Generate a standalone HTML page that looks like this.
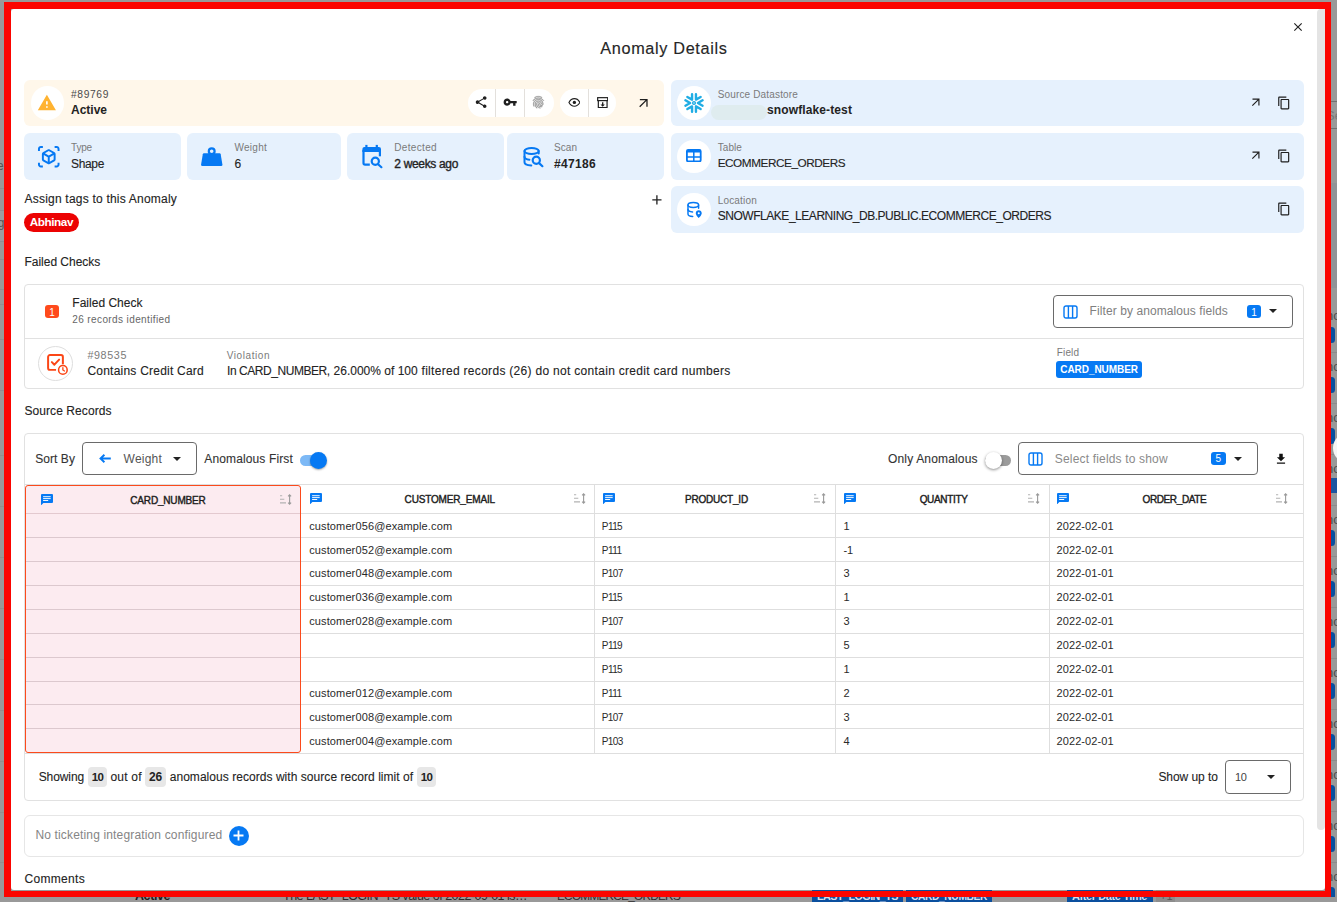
<!DOCTYPE html>
<html lang="en"><head><meta charset="utf-8"><title>Anomaly Details</title>
<style>
*{box-sizing:border-box;margin:0;padding:0}
html,body{width:1337px;height:902px;overflow:hidden;background:#999}
body{position:relative;font-family:"Liberation Sans",sans-serif;color:#232323}
.b{position:absolute;display:block}
.t{position:absolute;white-space:nowrap;line-height:1;display:block}
</style></head>
<body>
<div id="backdrop" aria-hidden="true">
<div class="b" style="left:0px;top:0px;width:1337px;height:902px;background:#999999;"></div>
<div class="b" style="left:1331px;top:183px;width:6px;height:105px;background:#909397;"></div>
<div class="b" style="left:1331px;top:101px;width:6px;height:1px;background:#707070;"></div>
<div class="b" style="left:1331px;top:128px;width:6px;height:1px;background:#707070;"></div>
<span class="t" style="left:1326.00px;top:109px;font-size:13px;color:#777;">Se</span>
<div class="b" style="left:1331px;top:352px;width:6px;height:1px;background:#8b8b8b;"></div>
<span class="t" style="left:1326.00px;top:309px;font-size:13px;color:#4c4c4c;">no</span>
<div class="b" style="left:1328px;top:326.5px;width:6.5px;height:16px;background:#0a4f9e;border-radius:4px;"></div>
<div class="b" style="left:1331px;top:403px;width:6px;height:1px;background:#8b8b8b;"></div>
<span class="t" style="left:1326.00px;top:360px;font-size:13px;color:#4c4c4c;">no</span>
<div class="b" style="left:1328px;top:377.45px;width:6.5px;height:16px;background:#0a4f9e;border-radius:4px;"></div>
<div class="b" style="left:1331px;top:454px;width:6px;height:1px;background:#8b8b8b;"></div>
<span class="t" style="left:1326.00px;top:411px;font-size:13px;color:#4c4c4c;">no</span>
<div class="b" style="left:1328px;top:428.4px;width:6.5px;height:16px;background:#0a4f9e;border-radius:4px;"></div>
<div class="b" style="left:1331px;top:505px;width:6px;height:1px;background:#8b8b8b;"></div>
<span class="t" style="left:1326.00px;top:462px;font-size:13px;color:#4c4c4c;">no</span>
<div class="b" style="left:1329px;top:478.35px;width:9px;height:15px;background:#1d55a0;"></div>
<div class="b" style="left:1331px;top:556px;width:6px;height:1px;background:#8b8b8b;"></div>
<span class="t" style="left:1326.00px;top:513px;font-size:13px;color:#4c4c4c;">no</span>
<div class="b" style="left:1328px;top:530.3px;width:6.5px;height:16px;background:#0a4f9e;border-radius:4px;"></div>
<div class="b" style="left:1331px;top:607px;width:6px;height:1px;background:#8b8b8b;"></div>
<span class="t" style="left:1326.00px;top:564px;font-size:13px;color:#4c4c4c;">no</span>
<div class="b" style="left:1328px;top:581.25px;width:6.5px;height:16px;background:#0a4f9e;border-radius:4px;"></div>
<div class="b" style="left:1331px;top:658px;width:6px;height:1px;background:#8b8b8b;"></div>
<span class="t" style="left:1326.00px;top:615px;font-size:13px;color:#4c4c4c;">no</span>
<div class="b" style="left:1328px;top:632.2px;width:6.5px;height:16px;background:#0a4f9e;border-radius:4px;"></div>
<div class="b" style="left:1331px;top:709px;width:6px;height:1px;background:#8b8b8b;"></div>
<span class="t" style="left:1326.00px;top:666px;font-size:13px;color:#4c4c4c;">no</span>
<div class="b" style="left:1328px;top:683.1500000000001px;width:6.5px;height:16px;background:#0a4f9e;border-radius:4px;"></div>
<div class="b" style="left:1331px;top:760px;width:6px;height:1px;background:#8b8b8b;"></div>
<span class="t" style="left:1326.00px;top:717px;font-size:13px;color:#4c4c4c;">no</span>
<div class="b" style="left:1328px;top:734.1px;width:6.5px;height:16px;background:#0a4f9e;border-radius:4px;"></div>
<div class="b" style="left:1331px;top:811px;width:6px;height:1px;background:#8b8b8b;"></div>
<span class="t" style="left:1326.00px;top:768px;font-size:13px;color:#4c4c4c;">no</span>
<div class="b" style="left:1328px;top:785.05px;width:6.5px;height:16px;background:#0a4f9e;border-radius:4px;"></div>
<div class="b" style="left:1331px;top:862px;width:6px;height:1px;background:#8b8b8b;"></div>
<span class="t" style="left:1326.00px;top:819px;font-size:13px;color:#4c4c4c;">no</span>
<div class="b" style="left:1328px;top:836.0px;width:6.5px;height:16px;background:#0a4f9e;border-radius:4px;"></div>
<div class="b" style="left:1331px;top:912px;width:6px;height:1px;background:#8b8b8b;"></div>
<span class="t" style="left:1326.00px;top:870px;font-size:13px;color:#4c4c4c;">no</span>
<div class="b" style="left:1328px;top:886.95px;width:6.5px;height:16px;background:#0a4f9e;border-radius:4px;"></div>
<div class="b" style="left:1333px;top:433px;width:30px;height:30px;background:#f4f4f4;border-radius:15px;"></div>
<div class="b" style="left:0px;top:455px;width:5px;height:1px;background:#909090;"></div>
<div class="b" style="left:0px;top:506px;width:5px;height:1px;background:#909090;"></div>
<div class="b" style="left:0px;top:557px;width:5px;height:1px;background:#909090;"></div>
<div class="b" style="left:0px;top:608px;width:5px;height:1px;background:#909090;"></div>
<div class="b" style="left:0px;top:659px;width:5px;height:1px;background:#909090;"></div>
<div class="b" style="left:0px;top:710px;width:5px;height:1px;background:#909090;"></div>
<div class="b" style="left:0px;top:761px;width:5px;height:1px;background:#909090;"></div>
<div class="b" style="left:0px;top:812px;width:5px;height:1px;background:#909090;"></div>
<div class="b" style="left:0px;top:862px;width:5px;height:1px;background:#909090;"></div>
<div class="b" style="left:0px;top:913px;width:5px;height:1px;background:#909090;"></div>
<div class="b" style="left:0px;top:188px;width:5px;height:1px;background:#8e8e93;"></div>
<div class="b" style="left:0px;top:210px;width:5px;height:1px;background:#8e8e93;"></div>
<div class="b" style="left:0px;top:241px;width:5px;height:1px;background:#8e8e93;"></div>
<div class="b" style="left:0px;top:259px;width:5px;height:1px;background:#8e8e93;"></div>
<div class="b" style="left:0px;top:289px;width:5px;height:1px;background:#8e8e93;"></div>
<div class="b" style="left:0px;top:304px;width:5px;height:1px;background:#8e8e93;"></div>
<div class="b" style="left:0px;top:339px;width:5px;height:1px;background:#8e8e93;"></div>
<div class="b" style="left:0px;top:390px;width:5px;height:1px;background:#8e8e93;"></div>
<div class="b" style="left:0px;top:211px;width:5px;height:30px;background:#9b9ba0;"></div>
<span class="t" style="left:-3.00px;top:160px;font-size:12px;color:#555;">e</span>
<span class="t" style="left:-9.00px;top:217px;font-size:12px;color:#555;">dg</span>
<div class="b" style="left:0px;top:897px;width:1337px;height:5px;background:#999999;"></div>
<div class="b" style="left:812px;top:886px;width:91px;height:19px;background:#0a4f9e;border-radius:3px;"></div>
<div class="b" style="left:906px;top:886px;width:86px;height:19px;background:#0a4f9e;border-radius:3px;"></div>
<div class="b" style="left:1067px;top:886px;width:85.5px;height:19px;background:#0a4f9e;border-radius:3px;"></div>
<div class="b" style="left:1156px;top:886px;width:19px;height:19px;background:#8c8c8c;border-radius:3px;"></div>
<span class="t" style="left:817.00px;top:891px;font-size:10.75px;font-weight:700;color:#d5dfec;letter-spacing:-0.523px;">LAST_LOGIN_TS</span>
<span class="t" style="left:911.00px;top:892px;font-size:10.25px;font-weight:700;color:#d5dfec;letter-spacing:-0.390px;">CARD_NUMBER</span>
<span class="t" style="left:1072.00px;top:891px;font-size:11px;font-weight:700;color:#d5dfec;letter-spacing:-0.406px;">After Date Time</span>
<span class="t" style="left:1160.00px;top:891px;font-size:11px;color:#555;">+1</span>
<span class="t" style="left:135.00px;top:890px;font-size:12.5px;font-weight:700;color:#1d1d1d;letter-spacing:-0.419px;">Active</span>
<span class="t" style="left:283.00px;top:890px;font-size:12.5px;color:#2a2a2a;letter-spacing:-0.505px;">The LAST_LOGIN_TS value of 2022-09-01 is…</span>
<span class="t" style="left:557.00px;top:890px;font-size:11.75px;color:#2a2a2a;letter-spacing:-0.718px;">ECOMMERCE_ORDERS</span>
</div>
<main id="anomaly-modal" role="dialog" aria-label="Anomaly Details">
<div class="b" style="left:11px;top:9px;width:1314px;height:881px;background:#ffffff;border-radius:3px;"></div>
<div class="b" style="left:1317px;top:9px;width:8px;height:821px;background:#e4e4e4;border-radius:4px 0 4px 4px;"></div>
<header>
<span class="t" style="left:600.30px;top:40px;font-size:16.25px;color:#262626;letter-spacing:0.653px;-webkit-text-stroke:0.15px #262626;">Anomaly Details</span>
<svg class="b" style="left:1291.0px;top:20.0px;" width="14" height="14" viewBox="0 0 24 24"><path d="M19 6.41L17.59 5 12 10.59 6.41 5 5 6.41 10.59 12 5 17.59 6.41 19 12 13.41 17.59 19 19 17.59 13.41 12z" fill="#222"/></svg>
</header>
<section id="summary">
<div class="b" style="left:24px;top:80px;width:640px;height:46px;background:#fff7ea;border-radius:6px;"></div>
<div class="b" style="left:31px;top:86px;width:33px;height:34px;background:#fff;border-radius:17px;"></div>
<svg class="b" style="left:37.225px;top:92.625px;" width="19.75" height="19.75" viewBox="0 0 24 24"><path d="M1 21h22L12 2 1 21zm12-3h-2v-2h2v2zm0-4h-2v-4h2v4z" fill="#ffb331"/></svg>
<span class="t" style="left:71.00px;top:90px;font-size:10.25px;color:#4a4a4a;letter-spacing:0.633px;">#89769</span>
<span class="t" style="left:71.00px;top:104px;font-size:12px;font-weight:700;">Active</span>
<div class="b" style="left:468px;top:89px;width:86px;height:28px;background:#fff;border-radius:14px;"></div>
<div class="b" style="left:495px;top:89px;width:1px;height:28px;background:#e3e0dc;"></div>
<div class="b" style="left:524px;top:89px;width:1px;height:28px;background:#e3e0dc;"></div>
<div class="b" style="left:560px;top:89px;width:56px;height:28px;background:#fff;border-radius:14px;"></div>
<div class="b" style="left:588px;top:89px;width:1px;height:28px;background:#e3e0dc;"></div>
<svg class="b" style="left:474.15000000000003px;top:95.44999999999999px;" width="14.3" height="14.3" viewBox="0 0 24 24"><path d="M18 16.08c-.76 0-1.44.3-1.96.77L8.91 12.7c.05-.23.09-.46.09-.7s-.04-.47-.09-.7l7.05-4.11c.54.5 1.25.81 2.04.81 1.66 0 3-1.34 3-3s-1.34-3-3-3-3 1.34-3 3c0 .24.04.47.09.7L8.04 9.81C7.5 9.31 6.79 9 6 9c-1.66 0-3 1.34-3 3s1.34 3 3 3c.79 0 1.5-.31 2.04-.81l7.12 4.16c-.05.21-.08.43-.08.65 0 1.61 1.31 2.92 2.92 2.92 1.61 0 2.92-1.31 2.92-2.92s-1.31-2.92-2.92-2.92z" fill="#1f1f1f"/></svg>
<svg class="b" style="left:502.65000000000003px;top:95.44999999999999px;" width="14.3" height="14.3" viewBox="0 0 24 24"><path d="M12.65 10C11.83 7.67 9.61 6 7 6c-3.31 0-6 2.69-6 6s2.69 6 6 6c2.61 0 4.83-1.67 5.65-4H17v4h4v-4h2v-4H12.65zM7 14c-1.1 0-2-.9-2-2s.9-2 2-2 2 .9 2 2-.9 2-2 2z" fill="#1f1f1f"/></svg>
<svg class="b" style="left:531.1px;top:95.4px;" width="14.6" height="14.6" viewBox="0 0 24 24"><path d="M17.81 4.47c-.08 0-.16-.02-.23-.06C15.66 3.42 14 3 12.01 3c-1.98 0-3.86.47-5.57 1.41-.24.13-.54.04-.68-.2-.13-.24-.04-.55.2-.68C7.82 2.52 9.86 2 12.01 2c2.13 0 3.99.47 6.03 1.52.25.13.34.43.21.67-.09.18-.26.28-.44.28zM3.500 9.720c-.1 0-.2-.03-.29-.09-.23-.16-.28-.47-.12-.7.99-1.400 2.250-2.500 3.750-3.270C9.980 4.040 14 4.030 17.150 5.650c1.500.770 2.760 1.860 3.750 3.250.16.220.11.540-.12.700-.23.160-.54.110-.7-.120-.9-1.260-2.040-2.250-3.390-2.940-2.870-1.470-6.540-1.470-9.400.010-1.360.700-2.500 1.700-3.400 2.960-.08.140-.23.210-.39.210zm6.250 12.070c-.13 0-.26-.05-.35-.15-.87-.87-1.340-1.430-2.010-2.640-.69-1.230-1.050-2.730-1.050-4.340 0-2.970 2.540-5.390 5.660-5.390s5.660 2.420 5.660 5.390c0 .28-.22.5-.5.5s-.5-.22-.5-.5c0-2.420-2.090-4.390-4.660-4.390-2.570 0-4.660 1.970-4.660 4.390 0 1.440.32 2.770.93 3.850.64 1.150 1.080 1.640 1.850 2.420.19.200.19.510 0 .710-.11.100-.24.150-.37.150zm7.170-1.850c-1.190 0-2.240-.3-3.100-.89-1.490-1.010-2.380-2.650-2.380-4.390 0-.28.220-.5.5-.5s.5.220.5.500c0 1.410.720 2.740 1.940 3.560.71.480 1.540.710 2.540.710.240 0 .640-.030 1.040-.100.270-.050.530.130.580.410.050.270-.130.530-.410.580-.570.110-1.070.120-1.210.120zM14.910 22c-.04 0-.09-.01-.13-.02-1.590-.44-2.630-1.030-3.720-2.100-1.400-1.390-2.170-3.240-2.170-5.220 0-1.620 1.380-2.940 3.080-2.940 1.700 0 3.080 1.320 3.080 2.940 0 1.070.93 1.940 2.080 1.940s2.080-.87 2.080-1.940c0-3.770-3.250-6.830-7.250-6.830-2.840 0-5.440 1.580-6.610 4.030-.39.810-.59 1.760-.59 2.800 0 .780.070 2.010.670 3.610.1.260-.03.550-.29.640-.26.100-.55-.04-.64-.29-.49-1.310-.73-2.610-.73-3.960 0-1.200.230-2.290.680-3.240 1.330-2.790 4.280-4.600 7.510-4.600 4.550 0 8.250 3.510 8.250 7.830 0 1.620-1.380 2.940-3.080 2.940s-3.080-1.320-3.080-2.940c0-1.070-.93-1.940-2.080-1.940s-2.080.87-2.080 1.940c0 1.710.660 3.310 1.870 4.510.95.940 1.860 1.460 3.270 1.850.27.070.42.350.35.610-.05.230-.26.380-.47.380z" fill="#8a8a8a" stroke="#9c9c9c" stroke-width="0.700"/></svg>
<svg class="b" style="left:567.7px;top:98.19999999999999px;" width="12.8" height="8.8" viewBox="0 0 14 10"><path d="M0.800 5C2.400 2 4.600 0.700 7 0.700S11.600 2 13.200 5C11.600 8 9.400 9.300 7 9.300S2.400 8 0.800 5z" fill="none" stroke="#1f1f1f" stroke-width="1.250"/><circle cx="7" cy="5" r="1.900" fill="#1f1f1f"/></svg>
<svg class="b" style="left:596.8px;top:96.7px;" width="11.4" height="11.4" viewBox="0 0 12 12"><g fill="none" stroke="#1f1f1f" stroke-width="1.250"><rect x="0.700" y="0.700" width="10.600" height="3.100"/><path d="M1.400 4.200v6.900h9.200V4.200"/></g><path d="M5.300 5.600h1.400v2.300h1.600L6 10.200 3.700 7.900h1.600z" fill="#1f1f1f"/></svg>
<svg class="b" style="left:635.95px;top:94.85px;" width="15.5" height="15.5" viewBox="0 0 24 24"><path d="M6 6v2h8.590L5 17.590 6.410 19 16 9.410V18h2V6z" fill="#1f1f1f"/></svg>
<div class="b" style="left:671px;top:80px;width:633px;height:46px;background:#e6f1fd;border-radius:6px;"></div>
<div class="b" style="left:677px;top:86px;width:34px;height:34px;background:#fff;border-radius:17px;"></div>
<svg class="b" style="left:682px;top:91px;" width="24" height="24" viewBox="-12 -12 24 24"><path d="M8.58 -2.70L3.90 -0.00L8.58 2.70M1.95 -8.78L1.95 -3.38L6.63 -6.08M-6.63 -6.08L-1.95 -3.38L-1.95 -8.78M-8.58 2.70L-3.90 -0.00L-8.58 -2.70M-1.95 8.78L-1.95 3.38L-6.63 6.08M6.63 6.08L1.95 3.38L1.95 8.78" fill="none" stroke="#20ade4" stroke-width="2.400" stroke-linecap="round" stroke-linejoin="round"/><circle cx="0" cy="0" r="1.500" fill="#7fd0f0" stroke="#20ade4" stroke-width="1.100"/></svg>
<span class="t" style="left:717.70px;top:90px;font-size:10px;color:#7a7a7a;letter-spacing:0.155px;">Source Datastore</span>
<div class="b" style="left:711px;top:105px;width:56px;height:15px;background:#dfecef;border-radius:7.5px;"></div>
<span class="t" style="left:767.00px;top:104px;font-size:12px;font-weight:700;letter-spacing:0.118px;">snowflake-test</span>
<svg class="b" style="left:1248.6px;top:95.0px;" width="14" height="14" viewBox="0 0 24 24"><path d="M6 6v2h8.590L5 17.590 6.410 19 16 9.410V18h2V6z" fill="#1f1f1f"/></svg>
<svg class="b" style="left:1276.5px;top:95.6px;" width="14" height="14" viewBox="0 0 24 24"><path d="M16 1H4c-1.100 0-2 .900-2 2v14h2V3h12V1zm3 4H8c-1.100 0-2 .900-2 2v14c0 1.100.900 2 2 2h11c1.100 0 2-.900 2-2V7c0-1.100-.900-2-2-2zm0 16H8V7h11v14z" fill="#1f1f1f"/></svg>
<div class="b" style="left:24px;top:133px;width:157px;height:47px;background:#e6f1fd;border-radius:6px;"></div>
<div class="b" style="left:187px;top:133px;width:154px;height:47px;background:#e6f1fd;border-radius:6px;"></div>
<div class="b" style="left:347px;top:133px;width:157px;height:47px;background:#e6f1fd;border-radius:6px;"></div>
<div class="b" style="left:507px;top:133px;width:157px;height:47px;background:#e6f1fd;border-radius:6px;"></div>
<svg class="b" style="left:36.75px;top:144.75px;" width="23.5" height="23.5" viewBox="0 0 24 24"><path d="M3 4c0-.55.45-1 1-1h2V1H4C2.340 1 1 2.340 1 4v2h2V4zM3 20v-2H1v2c0 1.660 1.340 3 3 3h2v-2H4c-.550 0-1-.450-1-1zM20 1h-2v2h2c.550 0 1 .450 1 1v2h2V4c0-1.660-1.340-3-3-3zM21 20c0 .550-.450 1-1 1h-2v2h2c1.660 0 3-1.340 3-3v-2h-2v2zM19 14.870V9.130c0-.720-.380-1.380-1-1.730l-5-2.880c-.310-.180-.650-.270-1-.270s-.690.090-1 .270l-5 2.870c-.620.350-1 1.010-1 1.730v5.740c0 .720.380 1.380 1 1.730l5 2.880c.310.180.650.270 1 .270s.690-.090 1-.270l5-2.880c.620-.340 1-1 1-1.720zm-8 2.300l-4-2.300v-4.630l4 2.330v4.600zm1-6.330L8.040 8.530 12 6.250l3.960 2.280L12 10.840zm5 4.030l-4 2.300v-4.600l4-2.330v4.630z" fill="#0679f3"/></svg>
<span class="t" style="left:71.00px;top:143px;font-size:10px;color:#7a7a7a;letter-spacing:-0.170px;">Type</span>
<span class="t" style="left:71.00px;top:158px;font-size:12px;letter-spacing:-0.339px;-webkit-text-stroke:0.12px #232323;">Shape</span>
<svg class="b" style="left:192px;top:136px;" width="40" height="40" viewBox="0 0 40 40"><path d="M11.900 17.200H27.600Q28.500 17.200 28.700 18.200L30.400 28.500Q30.600 30 29.200 30H10.300Q8.900 30 9.100 28.500L10.800 18.200Q11 17.200 11.900 17.200Z" fill="#0679f3"/><circle cx="19.700" cy="15.300" r="2.900" fill="none" stroke="#0679f3" stroke-width="2.200"/></svg>
<span class="t" style="left:234.50px;top:143px;font-size:10px;color:#7a7a7a;letter-spacing:0.260px;">Weight</span>
<span class="t" style="left:234.50px;top:158px;font-size:12px;-webkit-text-stroke:0.12px #232323;">6</span>
<svg class="b" style="left:352px;top:136px;" width="40" height="40" viewBox="0 0 40 40"><g fill="none" stroke="#0679f3" stroke-width="2.200"><path d="M17.800 28.600H13.100a1.600 1.600 0 0 1-1.600-1.600V14"/><path d="M27.900 15v5.300"/><circle cx="23.300" cy="25.300" r="3.600"/><path d="M26.100 28.200l3.300 3" stroke-linecap="round"/></g><path d="M10.400 16.100V13a2.100 2.100 0 0 1 2.100-2.100h14.400a2.100 2.100 0 0 1 2.100 2.100v3.100z" fill="#0679f3"/><rect x="13.300" y="8.900" width="2.200" height="3" fill="#0679f3"/><rect x="23.700" y="8.900" width="2.200" height="3" fill="#0679f3"/></svg>
<span class="t" style="left:394.30px;top:143px;font-size:10px;color:#7a7a7a;letter-spacing:0.335px;">Detected</span>
<span class="t" style="left:394.30px;top:158px;font-size:12px;letter-spacing:-0.334px;-webkit-text-stroke:0.35px #232323;">2 weeks ago</span>
<svg class="b" style="left:513px;top:136px;" width="40" height="40" viewBox="0 0 40 40"><g fill="none" stroke="#0679f3" stroke-width="2" stroke-linecap="round"><ellipse cx="18.600" cy="15" rx="7.100" ry="3.100"/><path d="M11.500 15v11.200c0 1.700 2.900 3 6.800 3.200"/><path d="M25.700 15v2.600"/><path d="M11.500 20.700c0 1.400 2.100 2.600 4.900 3"/><circle cx="23.300" cy="24.300" r="3.600" stroke-width="2.200"/><path d="M26.100 27.100l3.300 3.100" stroke-width="2.200"/></g></svg>
<span class="t" style="left:554.00px;top:143px;font-size:10px;color:#7a7a7a;letter-spacing:0.052px;">Scan</span>
<span class="t" style="left:554.00px;top:158px;font-size:12px;font-weight:700;letter-spacing:0.327px;">#47186</span>
<div class="b" style="left:671px;top:133px;width:633px;height:47px;background:#e6f1fd;border-radius:6px;"></div>
<div class="b" style="left:677px;top:140px;width:34px;height:33px;background:#fff;border-radius:17px;"></div>
<svg class="b" style="left:686.4px;top:148.6px;" width="15.6" height="13.3" viewBox="0 0 15.600 13.300"><rect x="0.900" y="0.900" width="13.800" height="11.500" rx="1.300" fill="none" stroke="#0679f3" stroke-width="1.800"/><rect x="0.900" y="0.900" width="13.800" height="2.600" fill="#0679f3"/><path d="M7.800 2v11M0.500 7.900h14.600" stroke="#0679f3" stroke-width="1.500"/></svg>
<span class="t" style="left:717.70px;top:143px;font-size:10px;color:#7a7a7a;letter-spacing:0.079px;">Table</span>
<span class="t" style="left:717.70px;top:157px;font-size:11.75px;letter-spacing:-0.443px;-webkit-text-stroke:0.12px #232323;">ECOMMERCE_ORDERS</span>
<svg class="b" style="left:1248.6px;top:148.0px;" width="14" height="14" viewBox="0 0 24 24"><path d="M6 6v2h8.590L5 17.590 6.410 19 16 9.410V18h2V6z" fill="#1f1f1f"/></svg>
<svg class="b" style="left:1276.5px;top:148.6px;" width="14" height="14" viewBox="0 0 24 24"><path d="M16 1H4c-1.100 0-2 .900-2 2v14h2V3h12V1zm3 4H8c-1.100 0-2 .900-2 2v14c0 1.100.900 2 2 2h11c1.100 0 2-.900 2-2V7c0-1.100-.900-2-2-2zm0 16H8V7h11v14z" fill="#1f1f1f"/></svg>
<span class="t" style="left:24.50px;top:193px;font-size:12px;letter-spacing:0.213px;-webkit-text-stroke:0.12px #232323;">Assign tags to this Anomaly</span>
<svg class="b" style="left:648.6px;top:191.6px;" width="15.8" height="15.8" viewBox="0 0 24 24"><path d="M19 13h-6v6h-2v-6H5v-2h6V5h2v6h6v2z" fill="#222"/></svg>
<div class="b" style="left:24px;top:213px;width:55px;height:19px;background:#ec0303;border-radius:9.5px;"></div>
<span class="t" style="left:29.70px;top:216px;font-size:11.75px;font-weight:700;color:#ffffff;letter-spacing:-0.435px;">Abhinav</span>
<div class="b" style="left:671px;top:186px;width:633px;height:47px;background:#e6f1fd;border-radius:6px;"></div>
<div class="b" style="left:677px;top:193px;width:34px;height:33px;background:#fff;border-radius:17px;"></div>
<svg class="b" style="left:686px;top:201px;" width="17.5" height="18.2" viewBox="0 0 24 25"><g fill="none" stroke="#0679f3" stroke-width="2" stroke-linecap="round"><ellipse cx="10" cy="5.500" rx="7.300" ry="3.300"/><path d="M2.700 5.500v12.500c0 1.800 2.800 3.200 6.500 3.400"/><path d="M17.300 5.500v4.500"/><path d="M2.700 11.800c0 1.700 2.700 3 6.300 3.300"/></g><path d="M17.500 12.800c-2.300 0-4.100 1.800-4.100 4 0 2.800 4.100 6.600 4.100 6.600s4.100-3.800 4.100-6.600c0-2.200-1.800-4-4.100-4zm0 5.400a1.400 1.400 0 1 1 0-2.800 1.400 1.400 0 0 1 0 2.800z" fill="#0679f3"/></svg>
<span class="t" style="left:717.70px;top:196px;font-size:10px;color:#7a7a7a;letter-spacing:0.187px;">Location</span>
<span class="t" style="left:717.70px;top:210px;font-size:12px;letter-spacing:-0.462px;-webkit-text-stroke:0.12px #232323;">SNOWFLAKE_LEARNING_DB.PUBLIC.ECOMMERCE_ORDERS</span>
<svg class="b" style="left:1276.5px;top:201.6px;" width="14" height="14" viewBox="0 0 24 24"><path d="M16 1H4c-1.100 0-2 .900-2 2v14h2V3h12V1zm3 4H8c-1.100 0-2 .900-2 2v14c0 1.100.900 2 2 2h11c1.100 0 2-.900 2-2V7c0-1.100-.900-2-2-2zm0 16H8V7h11v14z" fill="#1f1f1f"/></svg>
</section>
<section id="failed-checks">
<span class="t" style="left:24.50px;top:256px;font-size:12px;letter-spacing:-0.025px;-webkit-text-stroke:0.12px #232323;">Failed Checks</span>
<div class="b" style="left:24px;top:284px;width:1280px;height:105px;background:#fff;border-radius:4px;border:1px solid #e1e1e1;"></div>
<div class="b" style="left:25px;top:338px;width:1278px;height:1px;background:#e1e1e1;"></div>
<div class="b" style="left:45px;top:305px;width:14px;height:13px;background:#ff4a1c;border-radius:3px;"></div>
<span class="t" style="left:49.30px;top:308px;font-size:10px;color:#fff;">1</span>
<span class="t" style="left:72.30px;top:297px;font-size:12px;letter-spacing:0.014px;-webkit-text-stroke:0.12px #232323;">Failed Check</span>
<span class="t" style="left:72.30px;top:315px;font-size:10px;color:#666;letter-spacing:0.388px;">26 records identified</span>
<div class="b" style="left:1053px;top:295px;width:240px;height:33px;background:#fff;border-radius:4px;border:1px solid #6a6a6a;"></div>
<svg class="b" style="left:1063px;top:304.5px;" width="15" height="14" viewBox="0 0 15 14"><rect x="1" y="1" width="13" height="12" rx="2" fill="none" stroke="#0679f3" stroke-width="1.400"/><path d="M5.400 1v12M9.600 1v12" stroke="#0679f3" stroke-width="1.400"/></svg>
<span class="t" style="left:1089.60px;top:305px;font-size:12px;color:#808080;letter-spacing:0.086px;">Filter by anomalous fields</span>
<div class="b" style="left:1247px;top:305px;width:14px;height:13px;background:#0679f3;border-radius:3px;"></div>
<span class="t" style="left:1251.30px;top:308px;font-size:10px;color:#fff;">1</span>
<svg class="b" style="left:1268.5px;top:308.5px;" width="8" height="4" viewBox="0 0 8 4"><path d="M0 0h8L4 4z" fill="#222"/></svg>
<div class="b" style="left:38px;top:346px;width:35px;height:35px;background:#fff;border-radius:17.5px;border:1px solid #dedede;"></div>
<svg class="b" style="left:47px;top:354.2px;" width="21.5" height="21.5" viewBox="1.8 1.8 19.5 19.5"><g fill="none" stroke="#fb4616" stroke-width="1.800" stroke-linejoin="round"><path d="M16.200 11V4.500a1.700 1.700 0 0 0-1.700-1.700h-10A1.700 1.700 0 0 0 2.800 4.500v10a1.700 1.700 0 0 0 1.700 1.700H10"/><path d="M6.200 9.200l2.300 2.300 4.300-4.600" stroke-linecap="round"/><circle cx="16.200" cy="16.200" r="3.900" fill="#fff" stroke-width="1.400"/><path d="M16.200 14.100V16.300l1.500 .9" stroke-width="1.200" stroke-linecap="round"/></g></svg>
<span class="t" style="left:87.40px;top:350px;font-size:10.75px;color:#7a7a7a;letter-spacing:0.622px;">#98535</span>
<span class="t" style="left:87.40px;top:365px;font-size:12px;letter-spacing:0.228px;-webkit-text-stroke:0.12px #232323;">Contains Credit Card</span>
<span class="t" style="left:226.80px;top:351px;font-size:10px;color:#7a7a7a;letter-spacing:0.558px;">Violation</span>
<span class="t" style="left:227.00px;top:365px;font-size:12px;letter-spacing:-0.444px;-webkit-text-stroke:0.10px #232323;">In CARD_NUMBER, </span>
<span class="t" style="left:333.60px;top:365px;font-size:12px;-webkit-text-stroke:0.10px #232323;">26.000% of 100 </span>
<span class="t" style="left:421.50px;top:365px;font-size:12px;letter-spacing:0.301px;-webkit-text-stroke:0.10px #232323;">filtered records (26) do not contain credit card numbers</span>
<span class="t" style="left:1056.80px;top:348px;font-size:10px;color:#7a7a7a;letter-spacing:0.145px;">Field</span>
<div class="b" style="left:1056px;top:361px;width:86px;height:17px;background:#0679f3;border-radius:3px;"></div>
<span class="t" style="left:1060.30px;top:365px;font-size:10px;font-weight:700;color:#fff;letter-spacing:-0.058px;">CARD_NUMBER</span>
</section>
<section id="source-records">
<span class="t" style="left:24.50px;top:405px;font-size:12px;letter-spacing:0.069px;-webkit-text-stroke:0.12px #232323;">Source Records</span>
<div class="b" style="left:24px;top:433px;width:1280px;height:368px;background:#fff;border-radius:4px;border:1px solid #e1e1e1;"></div>
<span class="t" style="left:35.20px;top:453px;font-size:12px;color:#333;letter-spacing:0.065px;-webkit-text-stroke:0.10px #333;">Sort By</span>
<div class="b" style="left:82px;top:442px;width:115px;height:33px;background:#fff;border-radius:4px;border:1px solid #6a6a6a;"></div>
<svg class="b" style="left:99px;top:453.3px;" width="12.5" height="11" viewBox="0 0 12.500 11"><path d="M11.800 5.500H1.800M5.400 1.700L1.500 5.500 5.400 9.300" fill="none" stroke="#0679f3" stroke-width="1.900"/></svg>
<span class="t" style="left:123.60px;top:453px;font-size:12px;color:#555;letter-spacing:0.212px;">Weight</span>
<svg class="b" style="left:173px;top:457px;" width="8" height="4" viewBox="0 0 8 4"><path d="M0 0h8L4 4z" fill="#222"/></svg>
<span class="t" style="left:204.30px;top:453px;font-size:12px;color:#333;letter-spacing:0.127px;-webkit-text-stroke:0.10px #333;">Anomalous First</span>
<div class="b" style="left:300px;top:455px;width:26px;height:11px;background:#7db9f6;border-radius:5.5px;"></div>
<div class="b" style="left:310px;top:452px;width:17px;height:17px;background:#0679f3;border-radius:8.5px;box-shadow:0 1px 2px rgba(0,0,0,.35);"></div>
<span class="t" style="left:888.00px;top:453px;font-size:12px;color:#333;letter-spacing:0.166px;-webkit-text-stroke:0.10px #333;">Only Anomalous</span>
<div class="b" style="left:985px;top:455px;width:26px;height:11px;background:#9b9b9b;border-radius:5.5px;"></div>
<div class="b" style="left:985px;top:452px;width:17px;height:17px;background:#fff;border-radius:8.5px;box-shadow:0 1px 3px rgba(0,0,0,.45);"></div>
<div class="b" style="left:1018px;top:442px;width:240px;height:33px;background:#fff;border-radius:4px;border:1px solid #6a6a6a;"></div>
<svg class="b" style="left:1028px;top:452.3px;" width="15" height="14" viewBox="0 0 15 14"><rect x="1" y="1" width="13" height="12" rx="2" fill="none" stroke="#0679f3" stroke-width="1.400"/><path d="M5.400 1v12M9.600 1v12" stroke="#0679f3" stroke-width="1.400"/></svg>
<span class="t" style="left:1054.80px;top:453px;font-size:12px;color:#8a8a8a;letter-spacing:0.172px;">Select fields to show</span>
<div class="b" style="left:1211px;top:452px;width:15px;height:13px;background:#0679f3;border-radius:3px;"></div>
<span class="t" style="left:1215.60px;top:454px;font-size:10px;color:#fff;">5</span>
<svg class="b" style="left:1233.7px;top:456.5px;" width="8" height="4" viewBox="0 0 8 4"><path d="M0 0h8L4 4z" fill="#222"/></svg>
<svg class="b" style="left:1273.5px;top:451.6px;" width="14" height="14" viewBox="0 0 24 24"><path d="M19 9h-4V3H9v6H5l7 7 7-7zM5 18v2h14v-2H5z" fill="#111"/></svg>
<div class="b" style="left:25px;top:484px;width:1278px;height:1px;background:#dedede;"></div>
<div class="b" style="left:25px;top:513px;width:1278px;height:1px;background:#dedede;"></div>
<div class="b" style="left:25px;top:537px;width:1278px;height:1px;background:#dedede;"></div>
<div class="b" style="left:25px;top:561px;width:1278px;height:1px;background:#dedede;"></div>
<div class="b" style="left:25px;top:585px;width:1278px;height:1px;background:#dedede;"></div>
<div class="b" style="left:25px;top:609px;width:1278px;height:1px;background:#dedede;"></div>
<div class="b" style="left:25px;top:633px;width:1278px;height:1px;background:#dedede;"></div>
<div class="b" style="left:25px;top:657px;width:1278px;height:1px;background:#dedede;"></div>
<div class="b" style="left:25px;top:681px;width:1278px;height:1px;background:#dedede;"></div>
<div class="b" style="left:25px;top:704px;width:1278px;height:1px;background:#dedede;"></div>
<div class="b" style="left:25px;top:728px;width:1278px;height:1px;background:#dedede;"></div>
<div class="b" style="left:25px;top:753px;width:1278px;height:1px;background:#dedede;"></div>
<div class="b" style="left:594px;top:485px;width:1px;height:268px;background:#dedede;"></div>
<div class="b" style="left:835px;top:485px;width:1px;height:268px;background:#dedede;"></div>
<div class="b" style="left:1049px;top:485px;width:1px;height:268px;background:#dedede;"></div>
<div class="b" style="left:25px;top:485px;width:276px;height:268px;background:#fcebf0;border-radius:3px;border:1px solid #fb4a1c;"></div>
<div class="b" style="left:26px;top:513px;width:274px;height:1px;background:#e3c9cf;"></div>
<div class="b" style="left:26px;top:537px;width:274px;height:1px;background:#dcc8ce;"></div>
<div class="b" style="left:26px;top:561px;width:274px;height:1px;background:#dcc8ce;"></div>
<div class="b" style="left:26px;top:585px;width:274px;height:1px;background:#dcc8ce;"></div>
<div class="b" style="left:26px;top:609px;width:274px;height:1px;background:#dcc8ce;"></div>
<div class="b" style="left:26px;top:633px;width:274px;height:1px;background:#dcc8ce;"></div>
<div class="b" style="left:26px;top:657px;width:274px;height:1px;background:#dcc8ce;"></div>
<div class="b" style="left:26px;top:681px;width:274px;height:1px;background:#dcc8ce;"></div>
<div class="b" style="left:26px;top:704px;width:274px;height:1px;background:#dcc8ce;"></div>
<div class="b" style="left:26px;top:728px;width:274px;height:1px;background:#dcc8ce;"></div>
<svg class="b" style="left:40.9px;top:493.7px;" width="12" height="11.5" viewBox="0 0 12 11.500"><path d="M1 0h10a1 1 0 0 1 1 1v7a1 1 0 0 1-1 1H2.400L0 11.400V1a1 1 0 0 1 1-1z" fill="#0679f3"/><path d="M2.100 2.700h7.600M2.100 4.600h7.600M2.100 6.500h5.100" stroke="#fff" stroke-width="0.950" fill="none"/></svg>
<svg class="b" style="left:280.2px;top:494.2px;" width="12.5" height="11" viewBox="0 0 12.500 11"><g fill="none" stroke-width="1.100"><path d="M0 1.700h2.200M0 5.300h4.300M0 8.900h6" stroke="#b2b2b2"/><path d="M9.600 0.800v9.400M8.100 2.300l1.500-1.500 1.500 1.500M8.100 8.700l1.500 1.500 1.500-1.500" stroke="#9a9a9a"/></g></svg>
<span class="t" style="left:130.30px;top:496px;font-size:10px;color:#1c1c1c;letter-spacing:-0.176px;-webkit-text-stroke:0.40px #1c1c1c;">CARD_NUMBER</span>
<svg class="b" style="left:310px;top:492.59999999999997px;" width="12" height="11.5" viewBox="0 0 12 11.500"><path d="M1 0h10a1 1 0 0 1 1 1v7a1 1 0 0 1-1 1H2.400L0 11.400V1a1 1 0 0 1 1-1z" fill="#0679f3"/><path d="M2.100 2.700h7.600M2.100 4.600h7.600M2.100 6.500h5.100" stroke="#fff" stroke-width="0.950" fill="none"/></svg>
<svg class="b" style="left:573.5px;top:493.09999999999997px;" width="12.5" height="11" viewBox="0 0 12.500 11"><g fill="none" stroke-width="1.100"><path d="M0 1.700h2.200M0 5.300h4.300M0 8.900h6" stroke="#b2b2b2"/><path d="M9.600 0.800v9.400M8.100 2.300l1.500-1.500 1.500 1.500M8.100 8.700l1.500 1.500 1.500-1.500" stroke="#9a9a9a"/></g></svg>
<span class="t" style="left:404.60px;top:495px;font-size:10px;color:#1c1c1c;letter-spacing:-0.165px;-webkit-text-stroke:0.40px #1c1c1c;">CUSTOMER_EMAIL</span>
<svg class="b" style="left:602.9px;top:492.59999999999997px;" width="12" height="11.5" viewBox="0 0 12 11.500"><path d="M1 0h10a1 1 0 0 1 1 1v7a1 1 0 0 1-1 1H2.400L0 11.400V1a1 1 0 0 1 1-1z" fill="#0679f3"/><path d="M2.100 2.700h7.600M2.100 4.600h7.600M2.100 6.500h5.100" stroke="#fff" stroke-width="0.950" fill="none"/></svg>
<svg class="b" style="left:814.3px;top:493.09999999999997px;" width="12.5" height="11" viewBox="0 0 12.500 11"><g fill="none" stroke-width="1.100"><path d="M0 1.700h2.200M0 5.300h4.300M0 8.900h6" stroke="#b2b2b2"/><path d="M9.600 0.800v9.400M8.100 2.300l1.500-1.500 1.500 1.500M8.100 8.700l1.500 1.500 1.500-1.500" stroke="#9a9a9a"/></g></svg>
<span class="t" style="left:685.00px;top:495px;font-size:10px;color:#1c1c1c;letter-spacing:-0.210px;-webkit-text-stroke:0.40px #1c1c1c;">PRODUCT_ID</span>
<svg class="b" style="left:844.2px;top:492.59999999999997px;" width="12" height="11.5" viewBox="0 0 12 11.500"><path d="M1 0h10a1 1 0 0 1 1 1v7a1 1 0 0 1-1 1H2.400L0 11.400V1a1 1 0 0 1 1-1z" fill="#0679f3"/><path d="M2.100 2.700h7.600M2.100 4.600h7.600M2.100 6.500h5.100" stroke="#fff" stroke-width="0.950" fill="none"/></svg>
<svg class="b" style="left:1028.3px;top:493.09999999999997px;" width="12.5" height="11" viewBox="0 0 12.500 11"><g fill="none" stroke-width="1.100"><path d="M0 1.700h2.200M0 5.300h4.300M0 8.900h6" stroke="#b2b2b2"/><path d="M9.600 0.800v9.400M8.100 2.300l1.500-1.500 1.500 1.500M8.100 8.700l1.500 1.500 1.500-1.500" stroke="#9a9a9a"/></g></svg>
<span class="t" style="left:919.70px;top:495px;font-size:10px;color:#1c1c1c;letter-spacing:-0.345px;-webkit-text-stroke:0.40px #1c1c1c;">QUANTITY</span>
<svg class="b" style="left:1057.3px;top:492.59999999999997px;" width="12" height="11.5" viewBox="0 0 12 11.500"><path d="M1 0h10a1 1 0 0 1 1 1v7a1 1 0 0 1-1 1H2.400L0 11.400V1a1 1 0 0 1 1-1z" fill="#0679f3"/><path d="M2.100 2.700h7.600M2.100 4.600h7.600M2.100 6.500h5.100" stroke="#fff" stroke-width="0.950" fill="none"/></svg>
<svg class="b" style="left:1276.2px;top:493.09999999999997px;" width="12.5" height="11" viewBox="0 0 12.500 11"><g fill="none" stroke-width="1.100"><path d="M0 1.700h2.200M0 5.300h4.300M0 8.900h6" stroke="#b2b2b2"/><path d="M9.600 0.800v9.400M8.100 2.300l1.500-1.500 1.500 1.500M8.100 8.700l1.500 1.500 1.500-1.500" stroke="#9a9a9a"/></g></svg>
<span class="t" style="left:1142.50px;top:495px;font-size:10px;color:#1c1c1c;letter-spacing:-0.380px;-webkit-text-stroke:0.40px #1c1c1c;">ORDER_DATE</span>
<span class="t" style="left:309.20px;top:521px;font-size:11px;color:#2a2a2a;letter-spacing:0.123px;">customer056@example.com</span>
<span class="t" style="left:601.80px;top:522px;font-size:10px;color:#2a2a2a;letter-spacing:-0.578px;">P115</span>
<span class="t" style="left:843.40px;top:521px;font-size:11px;color:#2a2a2a;">1</span>
<span class="t" style="left:1056.50px;top:521px;font-size:11px;color:#2a2a2a;letter-spacing:0.094px;">2022-02-01</span>
<span class="t" style="left:309.20px;top:545px;font-size:11px;color:#2a2a2a;letter-spacing:0.123px;">customer052@example.com</span>
<span class="t" style="left:601.80px;top:546px;font-size:10px;color:#2a2a2a;letter-spacing:-0.559px;">P111</span>
<span class="t" style="left:843.40px;top:545px;font-size:11px;color:#2a2a2a;">-1</span>
<span class="t" style="left:1056.50px;top:545px;font-size:11px;color:#2a2a2a;letter-spacing:0.094px;">2022-02-01</span>
<span class="t" style="left:309.20px;top:568px;font-size:11px;color:#2a2a2a;letter-spacing:0.123px;">customer048@example.com</span>
<span class="t" style="left:601.80px;top:569px;font-size:10px;color:#2a2a2a;letter-spacing:-0.597px;">P107</span>
<span class="t" style="left:843.40px;top:568px;font-size:11px;color:#2a2a2a;">3</span>
<span class="t" style="left:1056.50px;top:568px;font-size:11px;color:#2a2a2a;letter-spacing:0.094px;">2022-01-01</span>
<span class="t" style="left:309.20px;top:592px;font-size:11px;color:#2a2a2a;letter-spacing:0.123px;">customer036@example.com</span>
<span class="t" style="left:601.80px;top:593px;font-size:10px;color:#2a2a2a;letter-spacing:-0.578px;">P115</span>
<span class="t" style="left:843.40px;top:592px;font-size:11px;color:#2a2a2a;">1</span>
<span class="t" style="left:1056.50px;top:592px;font-size:11px;color:#2a2a2a;letter-spacing:0.094px;">2022-02-01</span>
<span class="t" style="left:309.20px;top:616px;font-size:11px;color:#2a2a2a;letter-spacing:0.123px;">customer028@example.com</span>
<span class="t" style="left:601.80px;top:617px;font-size:10px;color:#2a2a2a;letter-spacing:-0.597px;">P107</span>
<span class="t" style="left:843.40px;top:616px;font-size:11px;color:#2a2a2a;">3</span>
<span class="t" style="left:1056.50px;top:616px;font-size:11px;color:#2a2a2a;letter-spacing:0.094px;">2022-02-01</span>
<span class="t" style="left:601.80px;top:641px;font-size:10px;color:#2a2a2a;letter-spacing:-0.578px;">P119</span>
<span class="t" style="left:843.40px;top:640px;font-size:11px;color:#2a2a2a;">5</span>
<span class="t" style="left:1056.50px;top:640px;font-size:11px;color:#2a2a2a;letter-spacing:0.094px;">2022-02-01</span>
<span class="t" style="left:601.80px;top:665px;font-size:10px;color:#2a2a2a;letter-spacing:-0.578px;">P115</span>
<span class="t" style="left:843.40px;top:664px;font-size:11px;color:#2a2a2a;">1</span>
<span class="t" style="left:1056.50px;top:664px;font-size:11px;color:#2a2a2a;letter-spacing:0.094px;">2022-02-01</span>
<span class="t" style="left:309.20px;top:688px;font-size:11px;color:#2a2a2a;letter-spacing:0.123px;">customer012@example.com</span>
<span class="t" style="left:601.80px;top:689px;font-size:10px;color:#2a2a2a;letter-spacing:-0.559px;">P111</span>
<span class="t" style="left:843.40px;top:688px;font-size:11px;color:#2a2a2a;">2</span>
<span class="t" style="left:1056.50px;top:688px;font-size:11px;color:#2a2a2a;letter-spacing:0.094px;">2022-02-01</span>
<span class="t" style="left:309.20px;top:712px;font-size:11px;color:#2a2a2a;letter-spacing:0.123px;">customer008@example.com</span>
<span class="t" style="left:601.80px;top:713px;font-size:10px;color:#2a2a2a;letter-spacing:-0.597px;">P107</span>
<span class="t" style="left:843.40px;top:712px;font-size:11px;color:#2a2a2a;">3</span>
<span class="t" style="left:1056.50px;top:712px;font-size:11px;color:#2a2a2a;letter-spacing:0.094px;">2022-02-01</span>
<span class="t" style="left:309.20px;top:736px;font-size:11px;color:#2a2a2a;letter-spacing:0.123px;">customer004@example.com</span>
<span class="t" style="left:601.80px;top:737px;font-size:10px;color:#2a2a2a;letter-spacing:-0.597px;">P103</span>
<span class="t" style="left:843.40px;top:736px;font-size:11px;color:#2a2a2a;">4</span>
<span class="t" style="left:1056.50px;top:736px;font-size:11px;color:#2a2a2a;letter-spacing:0.094px;">2022-02-01</span>
<span class="t" style="left:38.70px;top:771px;font-size:12px;letter-spacing:-0.090px;-webkit-text-stroke:0.10px #232323;">Showing</span>
<div class="b" style="left:88px;top:767px;width:19px;height:20px;background:#e7e7e7;border-radius:4px;"></div>
<span class="t" style="left:91.70px;top:772px;font-size:11.5px;font-weight:700;letter-spacing:-0.495px;">10</span>
<span class="t" style="left:110.40px;top:771px;font-size:12px;letter-spacing:0.213px;-webkit-text-stroke:0.10px #232323;">out of</span>
<div class="b" style="left:145.3px;top:767px;width:20.5px;height:20px;background:#e7e7e7;border-radius:4px;"></div>
<span class="t" style="left:149.00px;top:771px;font-size:12px;font-weight:700;letter-spacing:-0.173px;">26</span>
<span class="t" style="left:169.70px;top:771px;font-size:12px;letter-spacing:0.046px;-webkit-text-stroke:0.10px #232323;">anomalous records with source record limit of</span>
<div class="b" style="left:417px;top:767px;width:19px;height:20px;background:#e7e7e7;border-radius:4px;"></div>
<span class="t" style="left:420.70px;top:772px;font-size:11.5px;font-weight:700;letter-spacing:-0.495px;">10</span>
<span class="t" style="left:1158.40px;top:771px;font-size:12px;letter-spacing:-0.054px;-webkit-text-stroke:0.10px #232323;">Show up to</span>
<div class="b" style="left:1225px;top:760px;width:66px;height:34px;background:#fff;border-radius:4px;border:1px solid #6a6a6a;"></div>
<span class="t" style="left:1235.00px;top:772px;font-size:11px;color:#444;letter-spacing:-0.467px;">10</span>
<svg class="b" style="left:1267.3px;top:775px;" width="8" height="4" viewBox="0 0 8 4"><path d="M0 0h8L4 4z" fill="#222"/></svg>
</section>
<section id="ticketing">
<div class="b" style="left:24px;top:815px;width:1280px;height:42px;background:#fff;border-radius:6px;border:1px solid #e6e6e6;"></div>
<span class="t" style="left:35.40px;top:829px;font-size:12px;color:#858585;letter-spacing:0.156px;">No ticketing integration configured</span>
<div class="b" style="left:229px;top:825.5px;width:20px;height:20px;background:#0679f3;border-radius:10px;"></div>
<svg class="b" style="left:233.4px;top:829.6px;" width="11" height="11" viewBox="0 0 11 11"><path d="M5.500 0.500v10M0.500 5.500h10" stroke="#fff" stroke-width="1.800" fill="none"/></svg>
<span class="t" style="left:24.50px;top:873px;font-size:12px;letter-spacing:0.311px;-webkit-text-stroke:0.12px #232323;">Comments</span>
</section>
</main>
<div class="b" style="left:4px;top:2px;width:1327.2px;height:895px;border-style:solid;border-color:#fb0500;border-width:7px 6.200px 6px 7px;"></div>
</body></html>
